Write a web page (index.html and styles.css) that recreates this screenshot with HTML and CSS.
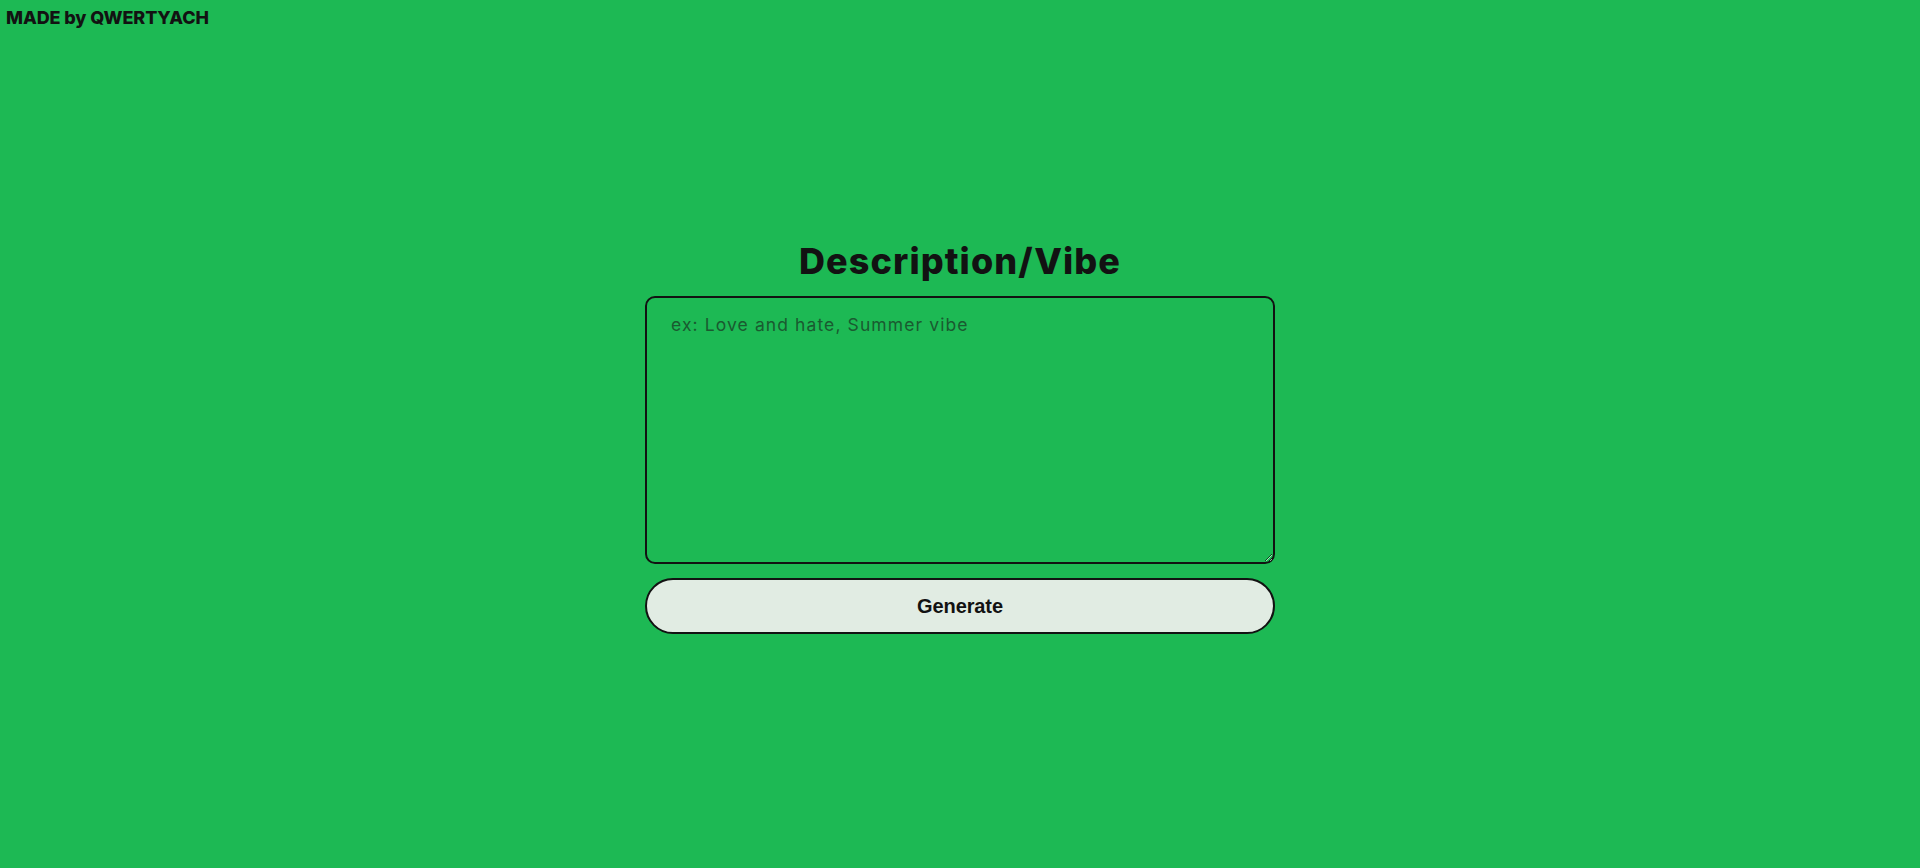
FILE: index.html
```html
<!DOCTYPE html>
<html lang="en">
<head>
<meta charset="utf-8">
<title>Description/Vibe</title>
<link rel="stylesheet" href="styles.css">
</head>
<body>
<header class="credit">MADE by QWERTYACH</header>
<main class="panel">
  <h1 class="title">Description/Vibe</h1>
  <textarea class="vibe" placeholder="ex: Love and hate, Summer vibe"></textarea>
  <button class="generate" type="button">Generate</button>
</main>
</body>
</html>
```

FILE: styles.css
```css
html, body {
  margin: 0;
  padding: 0;
  background: #1db954;
  height: 100%;
}
body {
  font-family: Inter, "Open Sans", sans-serif;
  color: #121212;
}
.credit {
  padding: 7px 0 0 6px;
  font-family: Inter, sans-serif;
  font-weight: 800;
  font-size: 18px;
  letter-spacing: -0.1px;
  line-height: 22px;
}
.panel {
  display: flex;
  flex-direction: column;
  align-items: center;
  padding-top: 210px;
}
.title {
  margin: 0 0 13px;
  font-family: Inter, sans-serif;
  font-weight: 800;
  font-size: 36px;
  line-height: 44px;
  letter-spacing: 1.1px;
}
.vibe {
  box-sizing: border-box;
  width: 630px;
  height: 268px;
  border: 2px solid #121212;
  border-radius: 10px;
  background: transparent;
  padding: 16px 24px;
  font-family: Inter, sans-serif;
  font-size: 17.5px;
  color: #121212;
  outline: none;
  resize: vertical;
}
.vibe::placeholder {
  color: #1a5a30;
  opacity: 1;
  letter-spacing: 1.1px;
}
.generate {
  box-sizing: border-box;
  margin-top: 14px;
  width: 630px;
  height: 56px;
  border: 2px solid #121212;
  border-radius: 28px;
  background: #e1ece3;
  font-family: "Liberation Sans", Arial, sans-serif;
  font-weight: 700;
  font-size: 20px;
  letter-spacing: -0.1px;
  color: #121212;
  cursor: pointer;
}
```
